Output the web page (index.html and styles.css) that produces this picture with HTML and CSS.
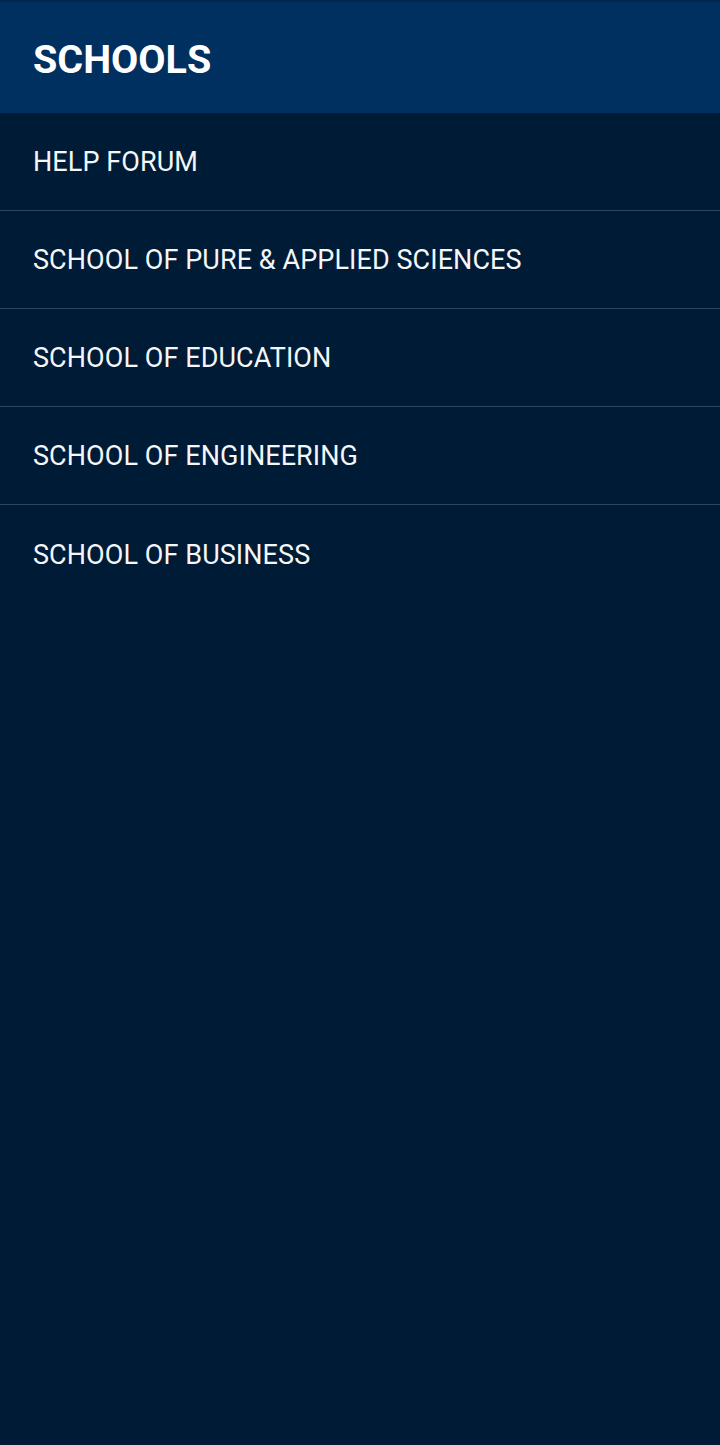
FILE: index.html
```html
<!DOCTYPE html>
<html>
<head>
<meta charset="utf-8">
<link rel="stylesheet" href="styles.css">
</head>
<body>
<div class="app">
  <header class="topbar"><h1 class="title">SCHOOLS</h1></header>
  <ul class="menu">
    <li class="item">HELP FORUM</li>
    <li class="item">SCHOOL OF PURE &amp; APPLIED SCIENCES</li>
    <li class="item">SCHOOL OF EDUCATION</li>
    <li class="item">SCHOOL OF ENGINEERING</li>
    <li class="item last">SCHOOL OF BUSINESS</li>
  </ul>
</div>
</body>
</html>
```
FILE: styles.css
```css
html, body {
  margin: 0;
  padding: 0;
  background: #001b35;
}
.app {
  width: 720px;
  min-height: 1445px;
  background: #001b35;
  font-family: Roboto, "Liberation Sans", sans-serif;
  color: #ffffff;
}
.topbar {
  height: 107px;
  padding-top: 4px;
  border-top: 2px solid #012851;
  background: #00305f;
  display: flex;
  align-items: center;
  padding-left: 33px;
  box-sizing: content-box;
}
.title {
  margin: 0;
  font-size: 39.5px;
  font-weight: 700;
  letter-spacing: 0;
}
.menu {
  list-style: none;
  margin: 0;
  padding: 0;
}
.item {
  display: flex;
  align-items: center;
  padding-left: 33px;
  padding-top: 1px;
  box-sizing: border-box;
  height: 98px;
  font-size: 27px;
  letter-spacing: 0.08px;
  color: #f4f6f8;
  border-bottom: 1px solid #2c4766;
}
.item.last {
  border-bottom: none;
}
```
